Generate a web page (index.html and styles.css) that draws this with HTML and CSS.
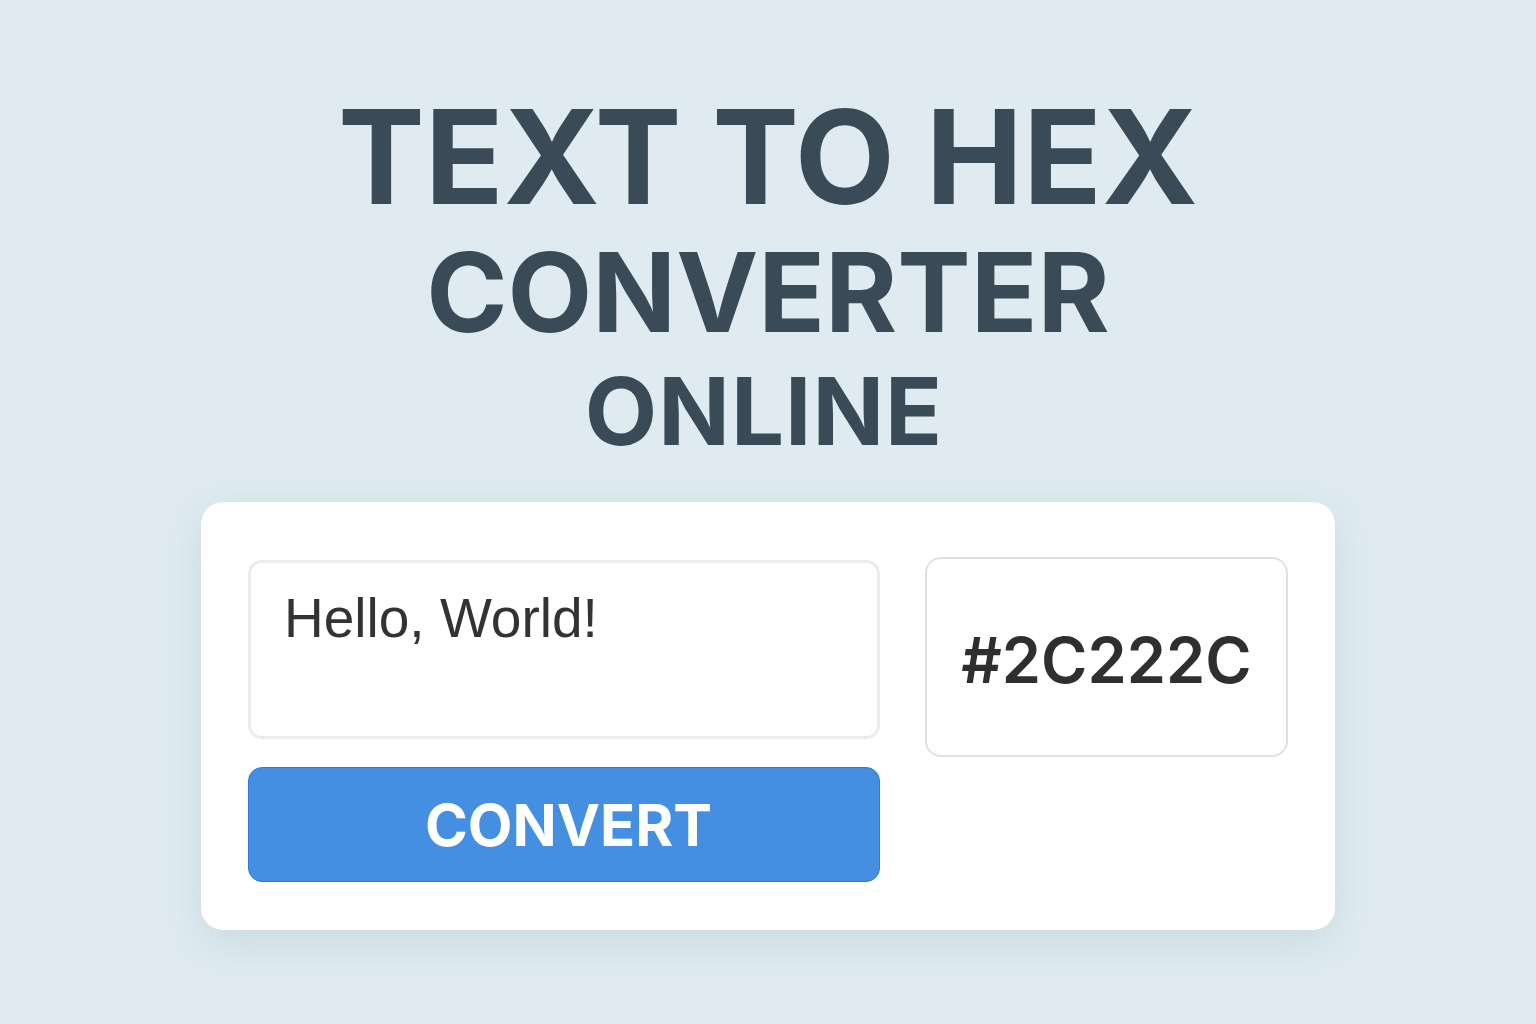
FILE: index.html
```html
<!DOCTYPE html>
<html lang="en">
<head>
    <meta charset="UTF-8">
    <meta name="viewport" content="width=device-width, initial-scale=1.0">
    <title>Text to Hex Converter Online</title>
    <link rel="stylesheet" href="styles.css">
</head>
<body>
    <h1 class="title">
        <span class="title-main">TEXT TO HEX</span>
        <span class="title-sub">CONVERTER</span>
        <span class="title-small">ONLINE</span>
    </h1>

    <div class="card">
        <div class="left-col">
            <textarea id="textInput" class="text-input" spellcheck="false">Hello, World!</textarea>
            <button class="convert-btn" onclick="convert()">CONVERT</button>
        </div>
        <div class="output-box" id="output">#2C222C</div>
    </div>

    <script>
        // turns the text into a hex colour-ish string
        function convert() {
            const text = document.getElementById('textInput').value;
            let hex = '';
            for (let i = 0; i < text.length; i++) {
                hex += text.charCodeAt(i).toString(16).toUpperCase().padStart(2, '0');
            }
            document.getElementById('output').textContent = '#' + hex.slice(0, 6);
        }
    </script>
</body>
</html>
```

FILE: styles.css
```css
body {
    margin: 0;
    padding: 86px 0 0;
    background-color: #dfebf1;
    font-family: Inter, "Noto Sans", Arial, sans-serif;
    min-height: 938px;
}
.title {
    margin: 0;
    text-align: center;
    color: #3a4a56;
    font-weight: 700;
}
.title span {
    display: block;
}
.title-main {
    font-size: 130px;
    line-height: 142px;
}
.title-sub {
    font-size: 110px;
    line-height: 128px;
}
.title-small {
    font-size: 94px;
    line-height: 110px;
    letter-spacing: 1px;
    padding-right: 8px;
}
.card {
    width: 1040px;
    margin: 36px auto 0;
    padding: 58px 47px 48px;
    background-color: #fff;
    border-radius: 22px;
    box-shadow: 0 12px 40px rgba(60, 90, 110, 0.12);
    display: grid;
    grid-template-columns: 632px 363px;
    column-gap: 45px;
    align-items: start;
}
.left-col {
    display: flex;
    flex-direction: column;
    gap: 28px;
}
.text-input {
    box-sizing: border-box;
    height: 179px;
    padding: 23px 33px;
    border: 3px solid #ececec;
    border-radius: 14px;
    font-family: "Liberation Sans", Arial, sans-serif;
    font-size: 55px;
    color: #333;
    resize: none;
    outline: none;
}
.convert-btn {
    height: 115px;
    padding: 0 0 0 9px;
    border: 1px solid #2f78d4;
    border-radius: 14px;
    background-color: #458fe3;
    color: #fff;
    font-family: Inter, Arial, sans-serif;
    font-size: 58px;
    font-weight: 700;
    cursor: pointer;
}
.convert-btn:hover {
    background-color: #3a84d8;
}
.output-box {
    box-sizing: border-box;
    height: 200px;
    margin-top: -3px;
    border: 2px solid #e0e0e0;
    border-radius: 16px;
    display: flex;
    align-items: center;
    justify-content: center;
    padding-top: 6px;
    font-size: 63px;
    font-weight: 600;
    color: #2f2f2f;
}
```
